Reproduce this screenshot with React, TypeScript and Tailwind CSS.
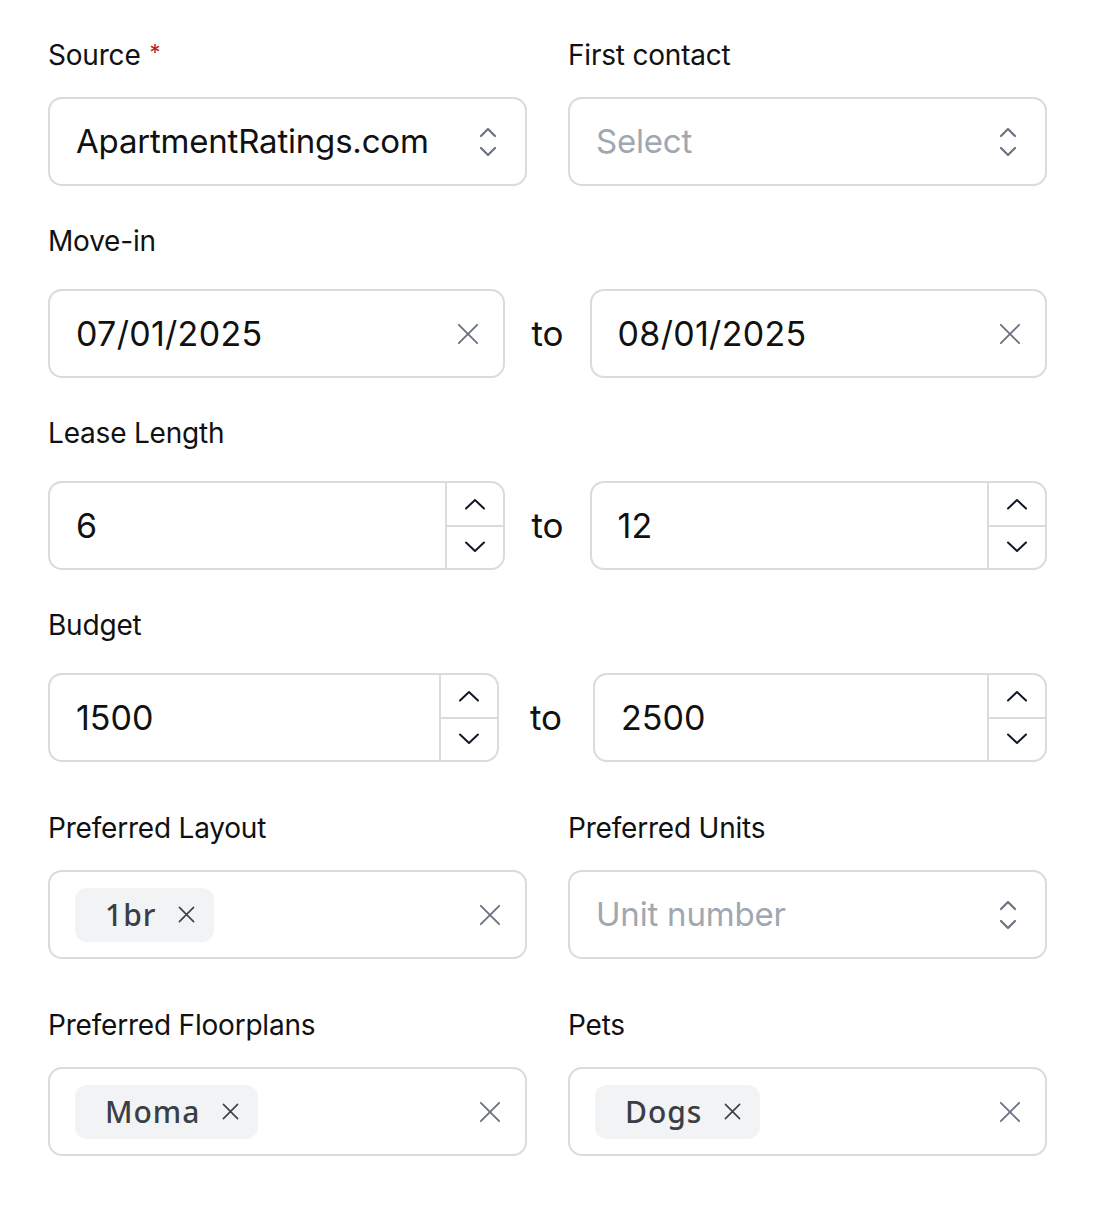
import React from 'react';

const font = { fontFamily: 'Inter, "Noto Sans", sans-serif' };

function SelectorIcon() {
  return (
    <svg width="22" height="34" viewBox="0 0 22 34" fill="none" stroke="#6b7280" strokeWidth="2.2" strokeLinecap="round" strokeLinejoin="round">
      <path d="M4 11 11 4l7 7" />
      <path d="M4 23l7 7 7-7" />
    </svg>
  );
}

function XIcon({ size = 24, color = '#6b7280', width = 2 }: { size?: number; color?: string; width?: number }) {
  return (
    <svg width={size} height={size} viewBox="0 0 24 24" fill="none" stroke={color} strokeWidth={width} strokeLinecap="round">
      <path d="M2 2l20 20M22 2 2 22" />
    </svg>
  );
}

function Chevron({ up }: { up?: boolean }) {
  return (
    <svg width="22" height="12" viewBox="0 0 22 12" fill="none" stroke="#111827" strokeWidth="2" strokeLinecap="round" strokeLinejoin="round">
      {up ? <path d="M2 10.5 11 2l9 8.5" /> : <path d="M2 1.5 11 10l9-8.5" />}
    </svg>
  );
}

function Label({ children, required, className = '' }: { children: React.ReactNode; required?: boolean; className?: string }) {
  return (
    <div className={`text-[28px] leading-[40px] tracking-[-0.2px] text-[#111111] ${className}`}>
      {children}
      {required && <span className="ml-[9px] align-top text-[22px] leading-[34px] text-[#b91c1c]">*</span>}
    </div>
  );
}

const box = 'h-[89px] rounded-[14px] border-2 border-[#d9dbdf] bg-white flex items-center';

function SelectBox({ value, placeholder }: { value?: string; placeholder?: string }) {
  return (
    <div className={`${box} pl-[26px] pr-[26px] justify-between`}>
      <span className={`text-[33px] tracking-[-0.2px] ${value ? 'text-[#111111]' : 'text-[#a1a7b0]'}`}>{value ?? placeholder}</span>
      <SelectorIcon />
    </div>
  );
}

function DateBox({ value }: { value: string }) {
  return (
    <div className={`${box} flex-1 pl-[26px] pr-[24px] justify-between`}>
      <span className="text-[34px] tracking-[0.3px] text-[#111111]">{value}</span>
      <XIcon size={22} />
    </div>
  );
}

function NumberBox({ value, className = '' }: { value: string; className?: string }) {
  return (
    <div className={`${box} ${className} overflow-hidden`}>
      <span className="flex-1 pl-[26px] text-[34px] text-[#111111]">{value}</span>
      <div className="flex h-full w-[58px] flex-col border-l-2 border-[#d9dbdf]">
        <div className="flex flex-1 items-center justify-center border-b-2 border-[#d9dbdf]">
          <Chevron up />
        </div>
        <div className="flex flex-1 items-center justify-center">
          <Chevron />
        </div>
      </div>
    </div>
  );
}

function ChipBox({ chip }: { chip: string }) {
  return (
    <div className={`${box} pl-[25px] pr-[24px] justify-between`}>
      <span className="flex h-[54px] items-center gap-[22px] rounded-[12px] bg-[#f2f3f5] pl-[30px] pr-[19px]">
        <span className="text-[30px] font-medium tracking-[1px] text-[#3a3f47]" style={{ fontFamily: '"Noto Sans", Inter, sans-serif' }}>
          {chip}
        </span>
        <XIcon size={17} color="#3a3f47" width={2.2} />
      </span>
      <XIcon size={22} />
    </div>
  );
}

function To({ className = '' }: { className?: string }) {
  return <span className={`text-[35px] text-[#111111] ${className}`}>to</span>;
}

export default function App() {
  return (
    <div className="min-h-[1212px] w-[1094px] bg-white pl-[48px] pr-[47px] pt-[35px]" style={font}>
      {/* Source / First contact */}
      <div className="grid grid-cols-2 gap-x-[41px]">
        <div>
          <Label required className="mb-[22px]">Source</Label>
          <SelectBox value="ApartmentRatings.com" />
        </div>
        <div>
          <Label className="mb-[22px]">First contact</Label>
          <SelectBox placeholder="Select" />
        </div>
      </div>

      {/* Move-in */}
      <Label className="mt-[35px] mb-[28px]">Move-in</Label>
      <div className="flex items-center">
        <DateBox value="07/01/2025" />
        <To className="mx-[26px]" />
        <DateBox value="08/01/2025" />
      </div>

      {/* Lease Length */}
      <Label className="mt-[35px] mb-[28px]">Lease Length</Label>
      <div className="flex items-center">
        <NumberBox value="6" className="flex-1" />
        <To className="mx-[26px]" />
        <NumberBox value="12" className="flex-1" />
      </div>

      {/* Budget */}
      <Label className="mt-[35px] mb-[28px]">Budget</Label>
      <div className="flex items-center">
        <NumberBox value="1500" className="w-[451px]" />
        <To className="mx-[31px]" />
        <NumberBox value="2500" className="flex-1" />
      </div>

      {/* Preferred Layout / Units */}
      <div className="mt-[46px] grid grid-cols-2 gap-x-[41px]">
        <div>
          <Label className="mb-[22px]">Preferred Layout</Label>
          <ChipBox chip="1br" />
        </div>
        <div>
          <Label className="mb-[22px]">Preferred Units</Label>
          <SelectBox placeholder="Unit number" />
        </div>
      </div>

      {/* Floorplans / Pets */}
      <div className="mt-[46px] grid grid-cols-2 gap-x-[41px]">
        <div>
          <Label className="mb-[22px]">Preferred Floorplans</Label>
          <ChipBox chip="Moma" />
        </div>
        <div>
          <Label className="mb-[22px]">Pets</Label>
          <ChipBox chip="Dogs" />
        </div>
      </div>
    </div>
  );
}
